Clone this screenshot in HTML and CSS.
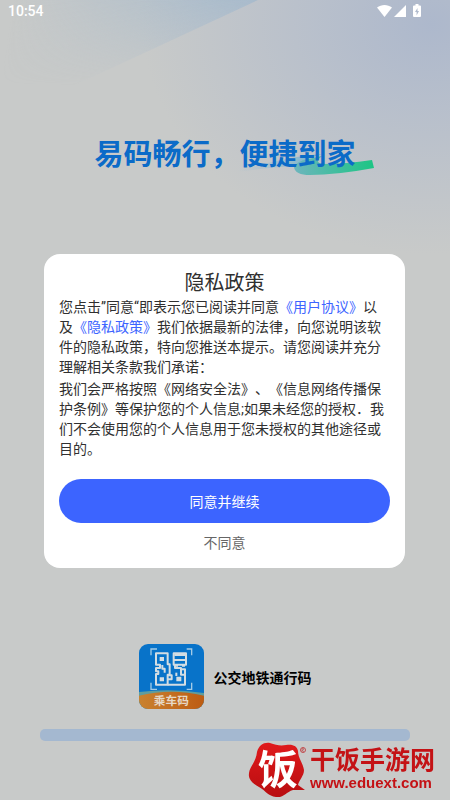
FILE: index.html
```html
<!DOCTYPE html>
<html lang="zh-CN">

<head>
    <meta charset="UTF-8">
    <meta name="viewport" content="width=device-width, initial-scale=1.0">
    <title>公交地铁通行码</title>
    <link rel="stylesheet" href="styles.css">
</head>

<body>
    <div class="page">
        <header class="status-bar">
            <span class="time">10:54</span>
            <svg class="status-icons" width="46" height="14" viewBox="0 0 46 14" fill="#fff">
                <path d="M0 3.600C4.300 0 10.700 0 15 3.600L7.500 13z" />
                <path d="M29 1v12H17z" />
                <path fill-rule="evenodd" d="M38.500 0h3v1.500h1.500q1 0 1 1V12q0 1-1 1h-6q-1 0-1-1V2.500q0-1 1-1h1.500zM40.500 4l-2.500 4h1.600v3.500l2.400-4.500h-1.500z" />
            </svg>
        </header>

        <div class="slogan">
            <svg class="swoosh" width="136" height="22" viewBox="0 0 136 22">
                <defs>
                    <linearGradient id="tail">
                        <stop offset="0" stop-color="#8fb9cf" stop-opacity="0" />
                        <stop offset="1" stop-color="#6fb3cf" />
                    </linearGradient>
                    <linearGradient id="stroke">
                        <stop offset="0" stop-color="#6db5bd" />
                        <stop offset="1" stop-color="#1cc584" />
                    </linearGradient>
                </defs>
                <path d="M0 15C28 11 46 3 84 0C72 4 60 8 56 12C38 13 20 15 0 18z" fill="url(#tail)" />
                <path d="M56 13Q59 7 70 5L84 2Q76 8 84 10Q108 10 134 6L136 14Q98 21 72 21Q57 21 56 13z" fill="url(#stroke)" />
            </svg>
            <h1>易码畅行，便捷到家</h1>
        </div>

        <footer class="splash">
            <div class="brand">
                <svg class="app-icon" width="65" height="65" viewBox="0 0 195 195">
                    <defs>
                        <clipPath id="iconShape">
                            <rect width="195" height="195" rx="27" />
                        </clipPath>
                        <linearGradient id="iconOrange">
                            <stop offset="0" stop-color="#c9822f" />
                            <stop offset="1" stop-color="#bd5c13" />
                        </linearGradient>
                    </defs>
                    <g clip-path="url(#iconShape)">
                        <rect width="195" height="195" fill="#0873c9" />
                        <path d="M0 144Q97 132 195 147V195H0z" fill="#5f9d9e" />
                        <path d="M0 155Q97 131 195 155V195H0z" fill="url(#iconOrange)" />
                    </g>
                    <g fill="none" stroke="#a3cbe6" stroke-width="4">
                        <path d="M36 34V15H54M143 15H158V34M158 116V136H143M54 136H36V116" />
                    </g>
                    <g fill="none" stroke="#d3dde3" stroke-width="6" stroke-linejoin="round">
                        <path d="M51 28H86V61H92V92H86V122H51V90H58V82H51V72H63V62H51z" />
                        <path d="M70 63V74H77V86" />
                        <path d="M86 94H98V106H86M86 122H138V92H126V72H108V62" />
                        <path d="M126 76H138V92" />
                        <path d="M104 28H141V62H104z" />
                        <path d="M104 48H141" />
                        <path d="M112 86V96" />
                    </g>
                    <g fill="#d3dde3">
                        <path d="M62 39H75V51H62zM62 100H75V112H62zM112 98H127V112H112z" />
                        <path d="M106 30H139V36H106zM108 60H117V68H108zM129 60H138V68H129z" />
                    </g>
                    <text class="icon-label" x="97" y="184">乘车码</text>
                </svg>
                <span class="brand-name">公交地铁通行码</span>
            </div>
            <progress class="loading" value="0" max="100" aria-label="加载进度"></progress>
        </footer>
    </div>

    <div class="overlay">
        <section class="dialog" role="dialog" aria-labelledby="dialogTitle">
            <h2 id="dialogTitle">隐私政策</h2>
            <p>您点击”同意“即表示您已阅读并同意<a href="#agreement">《用户协议》</a>以及<a href="#privacy">《隐私政策》</a>我们依据最新的法律，向您说明该软件的隐私政策，特向您推送本提示。请您阅读并充分理解相关条款我们承诺：</p>
            <p>我们会严格按照《网络安全法》、《信息网络传播保护条例》等保护您的个人信息;如果未经您的授权．我们不会使用您的个人信息用于您未授权的其他途径或目的。</p>
            <button class="btn agree" type="button">同意并继续</button>
            <button class="btn refuse" type="button">不同意</button>
        </section>
    </div>

    <div class="watermark">
        <svg width="62" height="58" viewBox="0 0 62 58">
            <defs>
                <linearGradient id="seal" x2="0" y2="1">
                    <stop offset="0" stop-color="#e01a1c" />
                    <stop offset="1" stop-color="#b80d10" />
                </linearGradient>
            </defs>
            <path d="M9 11C11 4 16 1 22 2C28 4 32 5 38 4C45 3 49 5 50 10C50 17 55 22 56 29C56 35 51 39 50 44L57 49H45C38 51 36 57 28 56C20 55 18 50 11 46C4 42 0 38 1 32C2 25 8 21 9 11z" fill="url(#seal)" />
            <text class="seal-char" x="30" y="43">饭</text>
            <circle cx="55" cy="9" r="2.500" fill="none" stroke="#c04a4c" />
            <path d="M54 11V7.500h1.500v1.500h-1.500l2 2" fill="none" stroke="#c04a4c" stroke-width=".6" />
        </svg>
        <div class="site">
            <span class="site-name">干饭手游网</span>
            <span class="site-url">www.eduext.com</span>
        </div>
    </div>
</body>

</html>
```

FILE: styles.css
```css
* {
    box-sizing: border-box;
}

body {
    margin: 0;
    font-family: Roboto, "Noto Sans CJK SC", sans-serif;
    background-color: #c8cac9;
    color: #303030;
}

.page {
    position: relative;
    display: flex;
    flex-direction: column;
    min-height: 100vh;
    padding-bottom: 59px;
    background: radial-gradient(ellipse 290px 230px at 96% 3%, #adb8cc, rgba(180, 189, 204, 0.8) 40%, rgba(200, 202, 201, 0));
}

/* blue light beam in the top left corner */
.page::before {
    content: "";
    position: absolute;
    top: 0;
    left: 0;
    width: 258px;
    height: 100px;
    background: linear-gradient(100deg, rgba(168, 187, 204, 0) 5%, #a8bbcc 95%);
    clip-path: polygon(0 0, 100% 0, 0 120%);
    -webkit-mask-image: linear-gradient(#000, transparent 85%);
    mask-image: linear-gradient(#000, transparent 85%);
}

.status-bar {
    position: relative;
    display: flex;
    justify-content: space-between;
    align-items: center;
    height: 22px;
    padding: 0 27px 0 8px;
    color: #fff;
}

.time {
    font-size: 14px;
    font-weight: 500;
}

.slogan {
    position: relative;
    align-self: center;
    margin-top: 112px;
}

.slogan h1 {
    position: relative;
    margin: 0;
    font-size: 29px;
    font-weight: 700;
    line-height: 42px;
    color: #0b6bc8;
}

.swoosh {
    position: absolute;
    right: -18px;
    bottom: 0;
}

.splash {
    display: flex;
    flex-direction: column;
    gap: 20px;
    margin-top: auto;
    padding: 0 40px;
}

.brand {
    display: flex;
    justify-content: center;
    align-items: center;
    gap: 10px;
}

.brand-name {
    font-size: 14px;
    font-weight: 700;
    color: #000;
}

.icon-label {
    font-size: 35px;
    font-weight: 700;
    text-anchor: middle;
    fill: #e6d9c6;
}

.loading {
    appearance: none;
    -webkit-appearance: none;
    display: block;
    width: 100%;
    height: 12px;
    border: none;
    border-radius: 5px;
    background: #a4b8d0;
    overflow: hidden;
}

.loading::-webkit-progress-bar {
    background: #a4b8d0;
}

.overlay {
    position: fixed;
    inset: 0;
    display: flex;
    justify-content: center;
    align-items: center;
    padding: 22px 45px 0 44px;
}

.dialog {
    display: flex;
    flex-direction: column;
    width: 100%;
    max-width: 480px;
    padding: 15px;
    border-radius: 16px;
    background: #fff;
}

.dialog h2 {
    margin: 0;
    font-size: 20px;
    font-weight: 400;
    line-height: 28px;
    text-align: center;
}

.dialog p {
    margin: 0 0 2px;
    padding-right: 4px;
    font-size: 14px;
    line-height: 20px;
    text-spacing-trim: space-all;
}

.dialog a {
    color: #3c64ff;
    text-decoration: none;
}

.btn {
    border: none;
    font-family: inherit;
    font-size: 14px;
    cursor: pointer;
}

.agree {
    height: 44px;
    margin-top: 18px;
    border-radius: 22px;
    background: #3c64ff;
    color: #fff;
}

.refuse {
    align-self: center;
    margin-top: 10px;
    padding: 0;
    line-height: 20px;
    background: none;
    color: #666;
}

.watermark {
    position: fixed;
    right: 15px;
    bottom: 1px;
    display: flex;
    align-items: center;
}

.seal-char {
    font-size: 40px;
    font-weight: 700;
    text-anchor: middle;
    fill: #fff;
}

.site {
    display: flex;
    flex-direction: column;
    color: #c41215;
    font-weight: 700;
}

.site-name {
    font-size: 25px;
    line-height: 26px;
}

.site-url {
    font-family: "Liberation Sans", sans-serif;
    font-size: 15px;
    line-height: 18px;
}
```
